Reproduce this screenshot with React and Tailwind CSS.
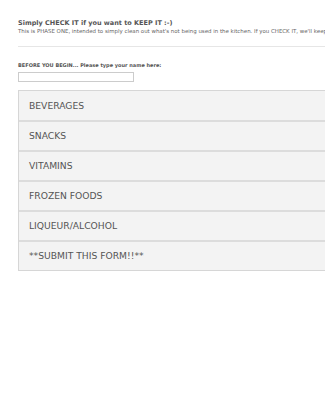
export default function App() {
  const items = ["BEVERAGES", "SNACKS", "VITAMINS", "FROZEN FOODS", "LIQUEUR/ALCOHOL", "**SUBMIT THIS FORM!!**"];
  return (
    <div className="w-[325px] h-[400px] overflow-hidden bg-white" style={{ fontFamily: '"DejaVu Sans", Verdana, sans-serif' }}>
      <div className="pl-[18px] w-[420px]">
        <div className="pt-[19px]">
          <h1 className="text-[6.5px] leading-[9px] font-bold text-[#555]">Simply CHECK IT if you want to KEEP IT :-)</h1>
          <p className="text-[5.45px] leading-[7px] text-[#666] whitespace-nowrap">This is PHASE ONE, intended to simply clean out what's not being used in the kitchen. If you CHECK IT, we'll keep it.</p>
        </div>
        <div className="mt-[11px] border-t border-[#e6e6e6]" />
        <div className="pt-[15px]">
          <label className="block text-[5px] leading-[7px] font-bold text-[#555]">BEFORE YOU BEGIN... Please type your name here:</label>
          <input className="mt-[3px] block w-[116px] h-[10px] border border-[#cccccc] bg-white" />
        </div>
        <div className="mt-[8px] border border-[#d6d6d6] bg-[#f3f3f3]">
          {items.map((t, i) => (
            <div key={t} className={`flex items-center pl-[10px] text-[9.2px] text-[#555] ${i > 0 ? "h-[30px] border-t-2 border-[#dcdcdc]" : "h-[29px]"}`}>
              {t}
            </div>
          ))}
        </div>
      </div>
    </div>
  );
}
